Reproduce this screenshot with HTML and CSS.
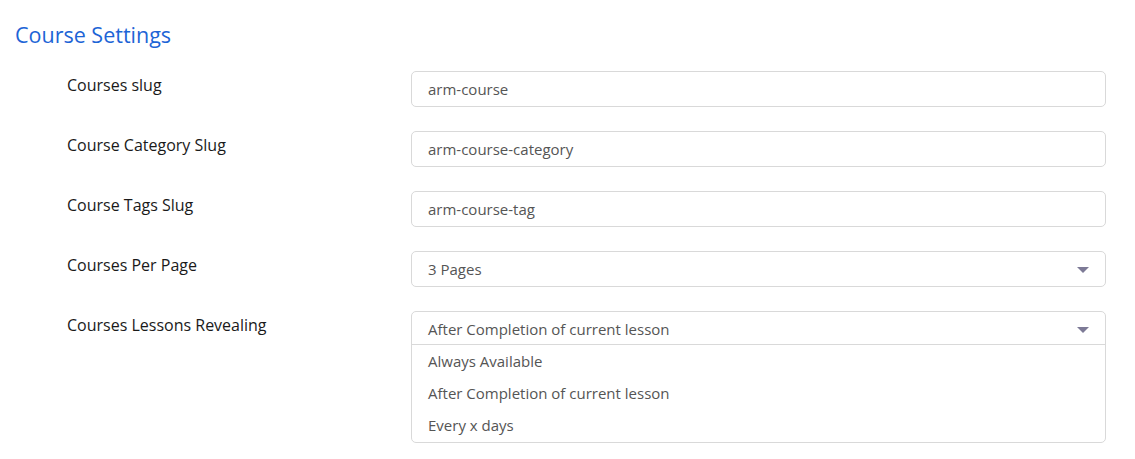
FILE: index.html
```html
<html>
<head>
<title>Course Settings</title>
<link rel="stylesheet" href="styles.css">
</head>
<body>
<div class="page">
  <h2 class="page-title">Course Settings</h2>
  <div class="form">
    <div class="form-row">
      <label class="form-label">Courses slug</label>
      <div class="form-field"><div class="text-box">arm-course</div></div>
    </div>
    <div class="form-row">
      <label class="form-label">Course Category Slug</label>
      <div class="form-field"><div class="text-box">arm-course-category</div></div>
    </div>
    <div class="form-row">
      <label class="form-label">Course Tags Slug</label>
      <div class="form-field"><div class="text-box">arm-course-tag</div></div>
    </div>
    <div class="form-row">
      <label class="form-label">Courses Per Page</label>
      <div class="form-field">
        <div class="text-box select-box">3 Pages<span class="caret"></span></div>
      </div>
    </div>
    <div class="form-row">
      <label class="form-label">Courses Lessons Revealing</label>
      <div class="form-field">
        <div class="select-open">
          <div class="text-box select-box select-current">After Completion of current lesson<span class="caret"></span></div>
          <ul class="select-list">
            <li>Always Available</li>
            <li>After Completion of current lesson</li>
            <li>Every x days</li>
          </ul>
        </div>
      </div>
    </div>
  </div>
</div>
</body>
</html>
```

FILE: styles.css
```css
body {
  margin: 0;
  font-family: "Open Sans", "Liberation Sans", sans-serif;
  background: #ffffff;
  color: #1e1e1e;
}
.page {
  padding: 20px 15px 0 15px;
}
.page-title {
  margin: 0;
  font-size: 21.5px;
  font-weight: 400;
  line-height: 30px;
  color: #1d64d6;
}
.form {
  padding-left: 52px;
  margin-top: 21px;
  display: flex;
  flex-direction: column;
  gap: 24px;
}
.form-row {
  display: flex;
  align-items: flex-start;
}
.form-label {
  width: 344px;
  flex-shrink: 0;
  font-size: 16px;
  line-height: 28px;
  color: #1a1a1a;
}
.form-field {
  width: 695px;
}
.text-box {
  box-sizing: border-box;
  height: 36px;
  border: 1px solid #d9d9d9;
  border-radius: 5px;
  padding: 0 16px;
  font-size: 15px;
  line-height: 34px;
  color: #555555;
}
.select-box {
  position: relative;
}
.caret {
  position: absolute;
  right: 16px;
  top: 15px;
  border-left: 6px solid transparent;
  border-right: 6px solid transparent;
  border-top: 6px solid #7d7a96;
}
.select-open {
  border: 1px solid #d9d9d9;
  border-radius: 5px;
}
.select-current {
  border: 0;
  border-bottom: 1px solid #d9d9d9;
  border-radius: 0;
  height: 33px;
  line-height: 34px;
}
.select-list {
  list-style: none;
  margin: 0;
  padding: 0 0 1px 0;
}
.select-list li {
  padding: 0 16px;
  font-size: 15px;
  line-height: 32px;
  color: #555555;
}
```
